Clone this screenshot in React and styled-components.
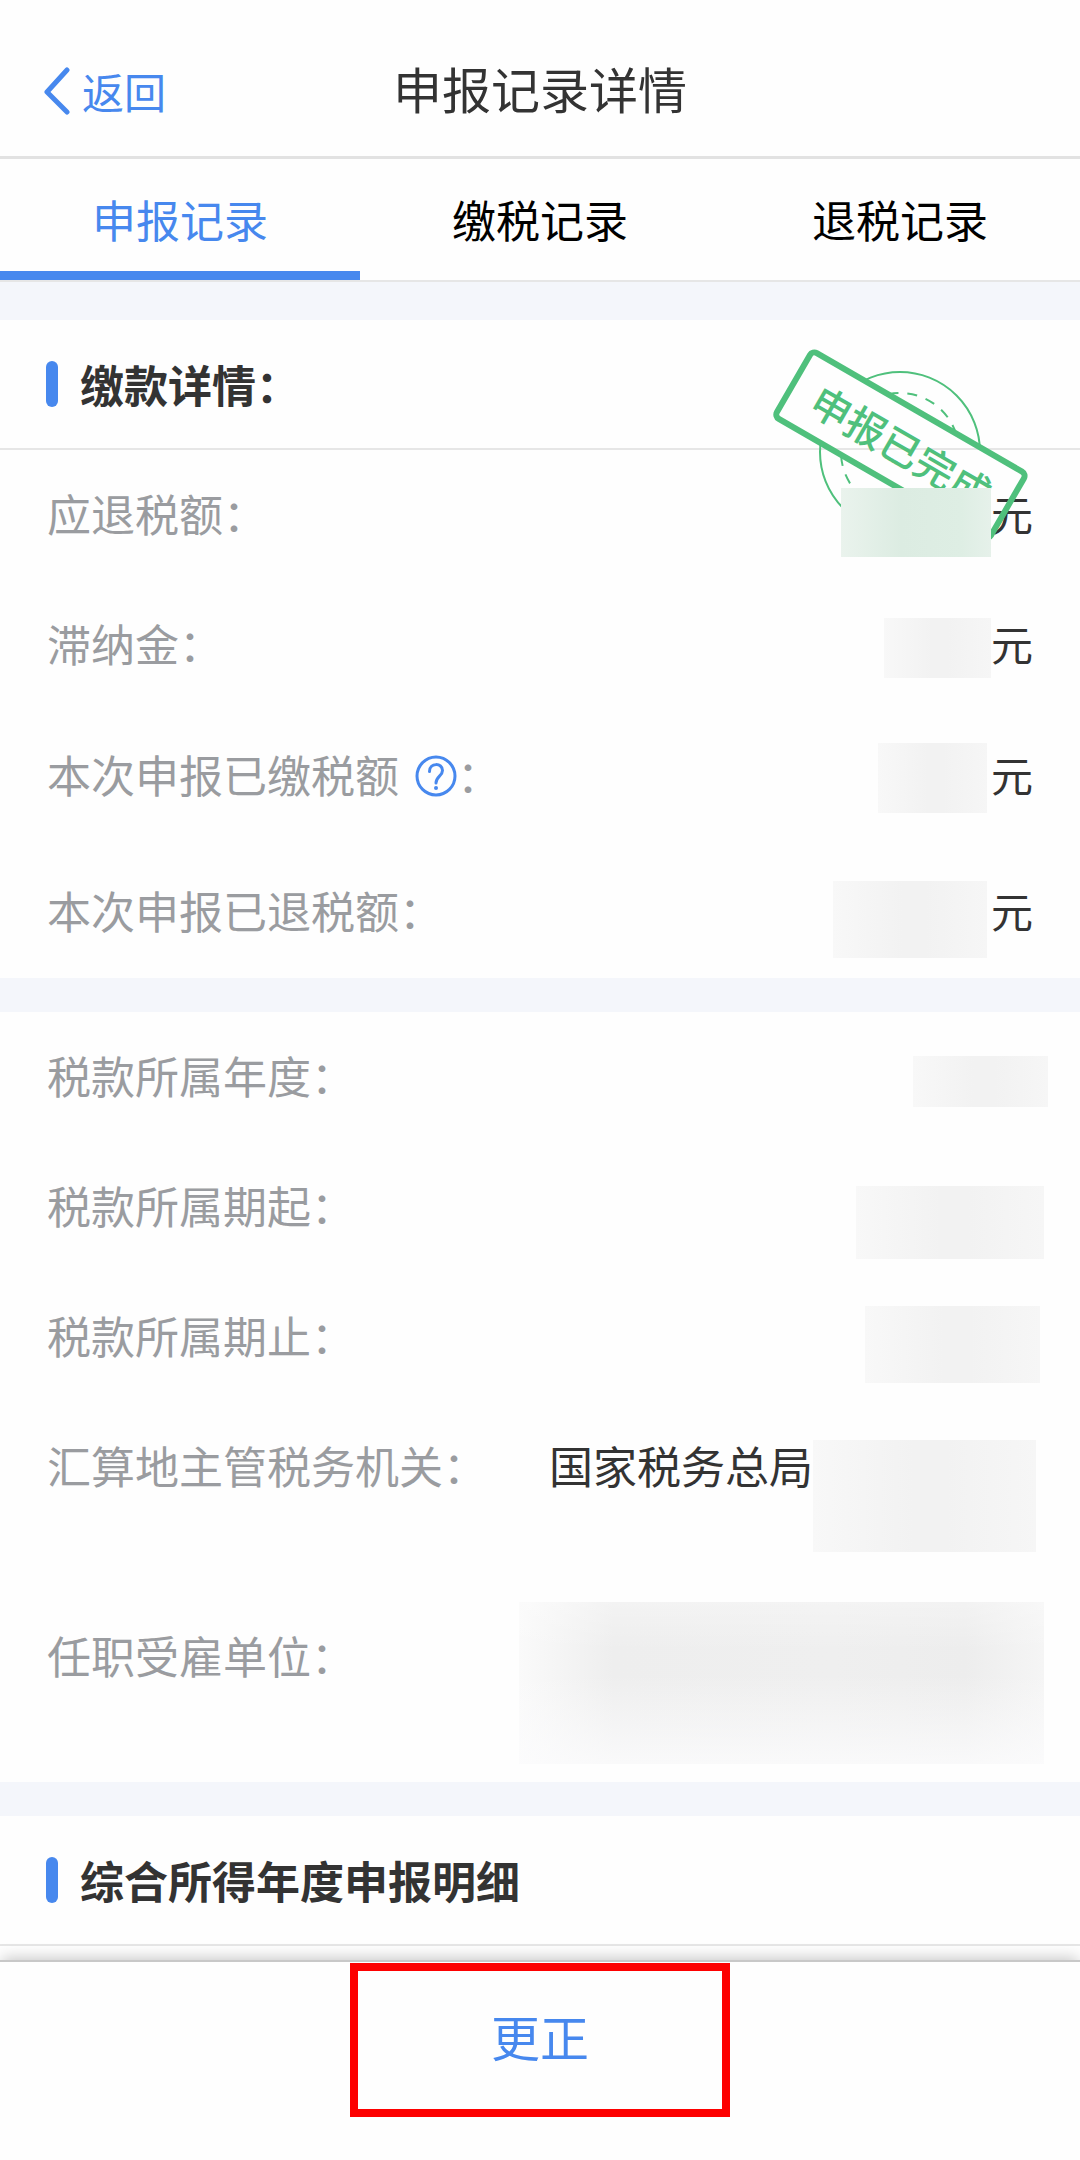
import styled, { createGlobalStyle } from 'styled-components';

const colors = {
    blue: '#4788ee',
    band: '#f4f6fb',
    text: '#333333',
    label: '#9a9ca0',
    green: '#4fc07c',
    line: '#e6e6e6',
    red: '#fd0000',
};

const GlobalStyle = createGlobalStyle`
    *{
        box-sizing:border-box;
    }
    body{
        margin:0;
        background-color:#fefefe;
        color:${colors.text};
        font-family:"Noto Sans CJK SC", sans-serif;
        font-size:44px;
        line-height:62px;
    }
    button{
        font:inherit;
        border:none;
        background:none;
        padding:0;
        cursor:pointer;
    }
`
const Page = styled.div`
    min-height:100vh;
    display:flex;
    flex-direction:column;
`
const Header = styled.header`
    display:grid;
    grid-template-columns:1fr auto 1fr;
    align-items:start;
    padding:60px 44px 34px;
    border-bottom:3px solid #e2e2e2;
`
const BackButton = styled.button`
    display:flex;
    align-items:center;
    gap:12px;
    color:${colors.blue};
    font-size:42px;
`
const Title = styled.h1`
    margin:0;
    font-size:49px;
    font-weight:400;
    line-height:56px;
`
const Tabs = styled.nav`
    display:grid;
    grid-template-columns:repeat(3, 1fr);
    border-bottom:2px solid ${colors.line};
`
const Tab = styled.button`
    && {
        padding:29px 0 21px;
        border-bottom:9px solid ${props => props.$active ? colors.blue : 'transparent'};
    }
    color:${props => props.$active ? colors.blue : '#000000'};
`
const Band = styled.div`
    height:${props => props.$tall ? '38px' : '34px'};
    background-color:${colors.band};
`
const Section = styled.section`
    position:relative;
`
const SectionTitle = styled.h2`
    display:flex;
    align-items:center;
    gap:22px;
    margin:0;
    padding:33px 46px;
    font-size:44px;
    font-weight:700;
    border-bottom:2px solid ${colors.line};
    &::before{
        content:'';
        width:12px;
        height:46px;
        border-radius:6px;
        background-color:${colors.blue};
    }
`
const List = styled.dl`
    margin:0;
`
const Row = styled.div`
    display:flex;
    justify-content:space-between;
    align-items:flex-start;
    height:${props => props.$height}px;
    padding:0 ${props => props.$wide ? '32px' : '47px'} 0 47px;
`
const Label = styled.dt`
    display:flex;
    align-items:center;
    padding-top:32px;
    color:${colors.label};
`
const HelpButton = styled.button`
    display:flex;
    && {
        padding-top:4px;
    }
    margin-left:16px;
    color:${colors.blue};
`
const Value = styled.dd`
    display:flex;
    align-items:flex-start;
    margin:0;
`
const ValueText = styled.span`
    padding-top:32px;
`
const Unit = styled(ValueText)`
    font-size:42px;
`
const Redacted = styled.span`
    position:relative;
    z-index:2;
    width:${props => props.$size[0]}px;
    height:${props => props.$size[1]}px;
    margin-top:${props => props.$top}px;
    margin-right:${props => props.$right || 0}px;
    background:${props => props.$fade ? 'linear-gradient(180deg, rgba(255, 255, 255, 0.3), transparent 30%, transparent 45%, rgba(252, 252, 253, 0.8)),' : ''}
        ${props => props.$green
        ? 'linear-gradient(90deg, #eaf3ed, #dcece2 40%, #deeee4 80%, #e6f1ea)'
        : props.$fade
        ? 'linear-gradient(90deg, #fafafa, #eeeeee 18%, #efefef 60%, #ededed 85%, #f5f5f5)'
        : 'linear-gradient(90deg, #f8f8f8, #f2f2f2 45%, #f2f2f2 60%, #f6f6f6)'};
`
const StampBox = styled.div`
    position:absolute;
    z-index:1;
    top:10px;
    right:0;
    pointer-events:none;
    svg{
        display:block;
    }
`
const Footer = styled.footer`
    position:relative;
    display:flex;
    justify-content:center;
    margin-top:auto;
    padding:1px 0 43px;
    border-top:2px solid #c8c8c8;
    background-color:#fefefe;
    box-shadow:0 -4px 14px -2px rgba(0, 0, 0, 0.22);
`
const CorrectButton = styled.button`
    && {
        border:8px solid ${colors.red};
        padding-bottom:8px;
    }
    width:380px;
    height:154px;
    color:${colors.blue};
    font-size:49px;
`

const tabs = ['申报记录', '缴税记录', '退税记录'];

const payments = [
    { label: '应退税额', height: 130, size: [150, 69], top: 38, green: true },
    { label: '滞纳金', height: 131, size: [107, 60], top: 38 },
    { label: '本次申报已缴税额', height: 136, size: [109, 70], top: 32, right: 4, help: true },
    { label: '本次申报已退税额', height: 131, size: [154, 77], top: 34, right: 4 },
];

const details = [
    { label: '税款所属年度', height: 130, size: [135, 51], top: 44 },
    { label: '税款所属期起', height: 130, size: [188, 73], top: 44, right: 4 },
    { label: '税款所属期止', height: 130, size: [175, 77], top: 34, right: 8 },
    { label: '汇算地主管税务机关', height: 190, size: [223, 112], top: 38, right: 12, text: '国家税务总局' },
    { label: '任职受雇单位', height: 190, size: [525, 162], top: 10, right: 4, fade: true },
];

function BackIcon(){
    return (
        <svg width="26" height="48" viewBox="0 0 26 48" fill="none" stroke="currentColor" strokeWidth="5" strokeLinecap="round" strokeLinejoin="round">
            <path d="M23 3 L3 25 L23 45" />
        </svg>
    )
}

function HelpIcon(){
    return (
        <svg width="42" height="42" viewBox="0 0 42 42" fill="none" stroke="currentColor" strokeWidth="3">
            <circle cx="21" cy="21" r="19" />
            <path d="M14.500 16.500 C14.500 7.500 27.500 7.500 27.500 15.500 C27.500 21 21 21.500 21 28" strokeLinecap="round" />
            <circle cx="21" cy="33" r="2" fill="currentColor" stroke="none" />
        </svg>
    )
}

function Stamp(){
    return (
        <StampBox>
            <svg width="340" height="240" viewBox="0 0 340 240" fill="none" stroke={colors.green}>
                <mask id="outsidePlate">
                    <rect width="340" height="240" fill="#fff" stroke="none" />
                    <rect x="36" y="77" width="248" height="77" fill="#000" stroke="none" transform="rotate(30 160 115)" />
                </mask>
                <g mask="url(#outsidePlate)" strokeWidth="2">
                    <circle cx="160" cy="122" r="80" />
                    <circle cx="160" cy="122" r="59" strokeDasharray="10 9" />
                </g>
                <g transform="rotate(30 160 115)">
                    <rect x="37" y="77" width="247" height="76" rx="5" strokeWidth="6" />
                    <text x="162" y="132" textAnchor="middle" fontSize="40" fontWeight="500" fill={colors.green} stroke="none">申报已完成</text>
                </g>
            </svg>
        </StampBox>
    )
}

function Rows(props){
    const {items, unit} = props;
    return (
        <List>
            {items.map((item) => (
                <Row key={item.label} $height={item.height} $wide={!unit}>
                    <Label>
                        {item.label}
                        {item.help && <HelpButton aria-label="help"><HelpIcon /></HelpButton>}
                        ：
                    </Label>
                    <Value>
                        {item.text && <ValueText>{item.text}</ValueText>}
                        <Redacted $size={item.size} $top={item.top} $right={item.right} $green={item.green} $fade={item.fade} />
                        {unit && <Unit>{unit}</Unit>}
                    </Value>
                </Row>
            ))}
        </List>
    )
}

function App(){
    return (
        <Page>
            <GlobalStyle />
            <Header>
                <BackButton><BackIcon />返回</BackButton>
                <Title>申报记录详情</Title>
            </Header>
            <Tabs>
                {tabs.map((tab, index) => (
                    <Tab key={tab} $active={index === 0}>{tab}</Tab>
                ))}
            </Tabs>
            <Band $tall />
            <Section>
                <SectionTitle>缴款详情：</SectionTitle>
                <Stamp />
                <Rows items={payments} unit="元" />
            </Section>
            <Band />
            <Section>
                <Rows items={details} />
            </Section>
            <Band />
            <Section>
                <SectionTitle>综合所得年度申报明细</SectionTitle>
            </Section>
            <Footer>
                <CorrectButton>更正</CorrectButton>
            </Footer>
        </Page>
    )
}
export default App;
